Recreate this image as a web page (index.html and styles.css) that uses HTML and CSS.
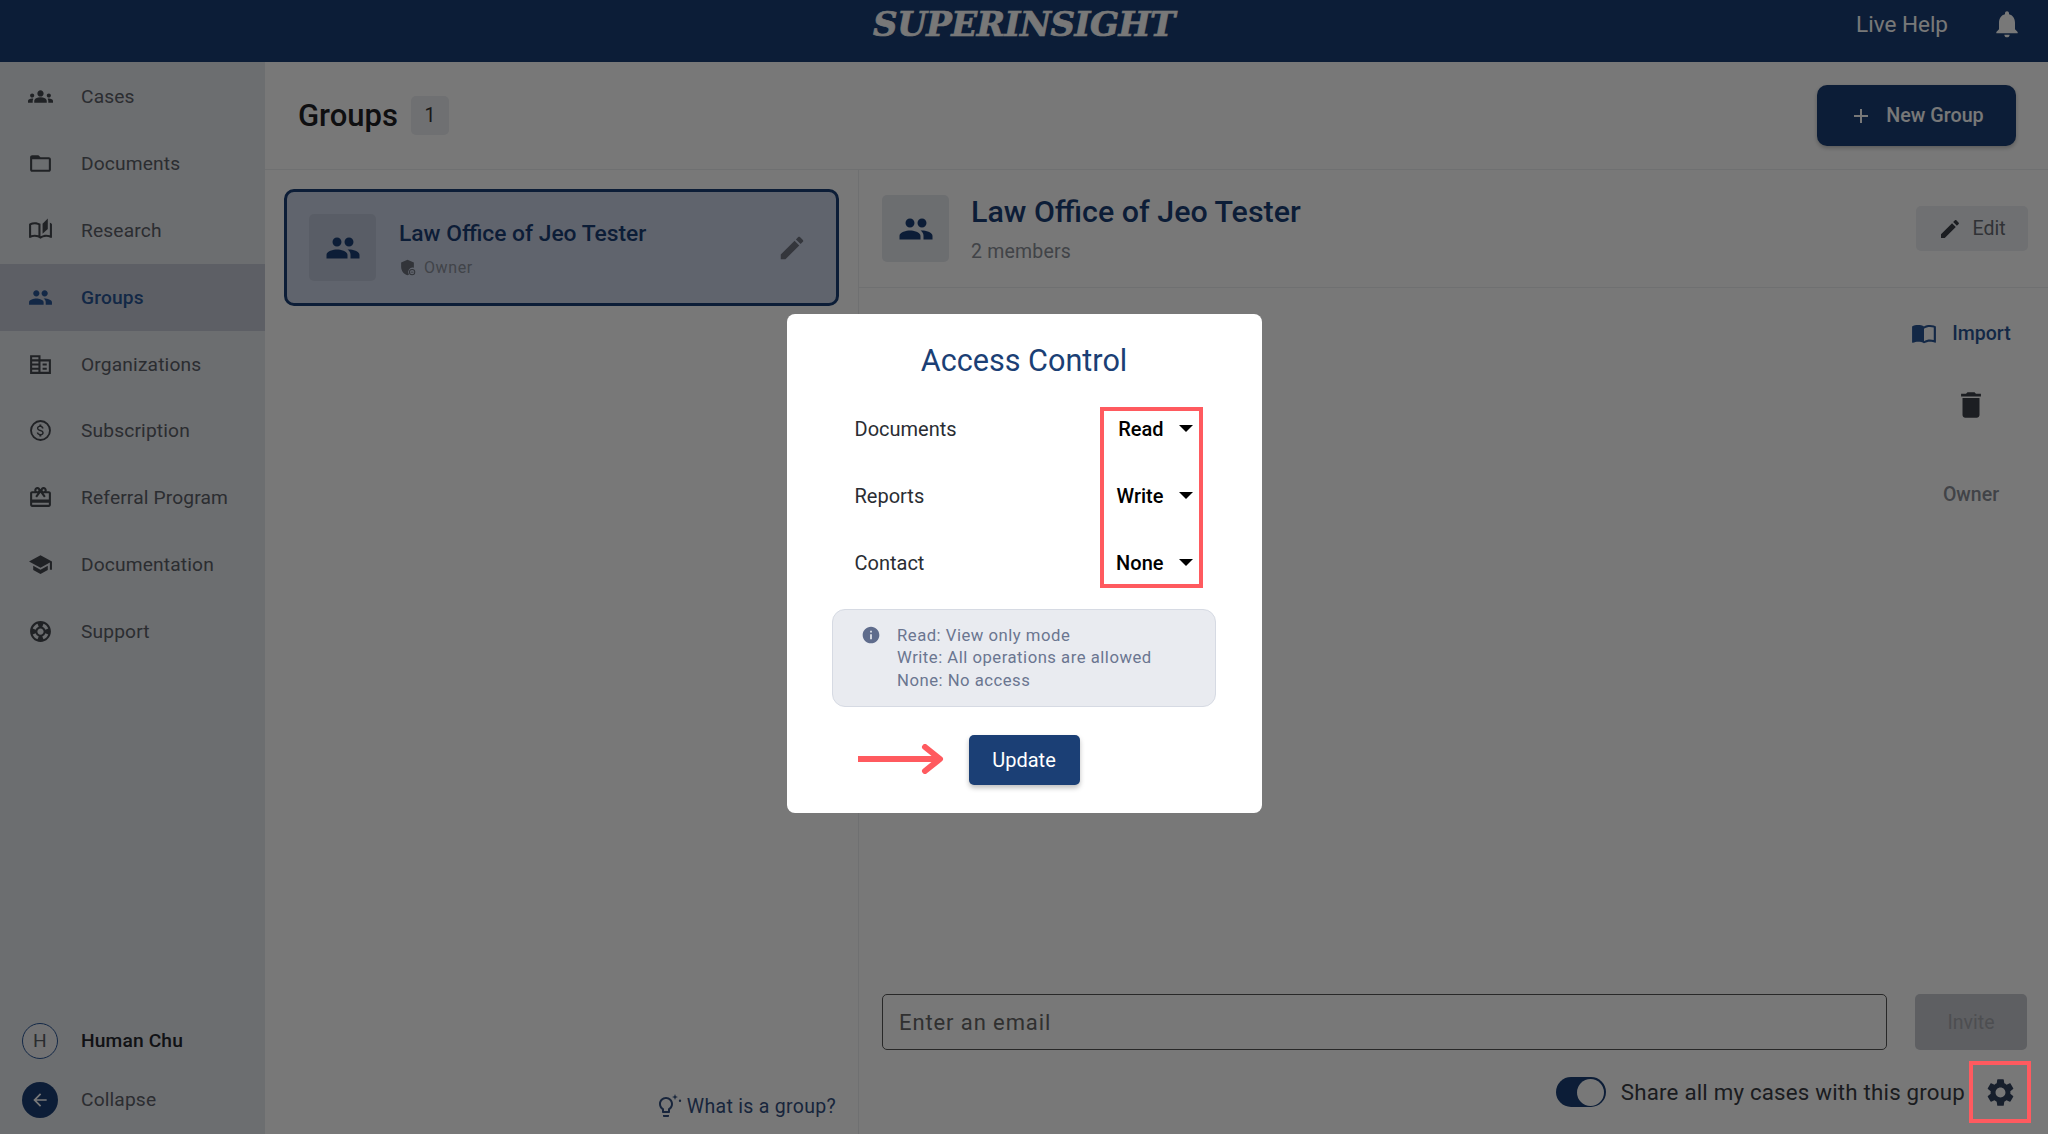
FILE: index.html
```html
<!DOCTYPE html>
<html lang="en">
<head>
	<meta charset="UTF-8">
	<title>Groups - Superinsight</title>
	<link rel="stylesheet" href="styles.css">
</head>
<body>

<svg class="sprite" xmlns="http://www.w3.org/2000/svg">
	<symbol id="i-cases" viewBox="0 0 24 24"><path d="M12 12.75c1.63 0 3.07.39 4.24.9 1.08.48 1.76 1.56 1.76 2.73V18H6v-1.61c0-1.18.68-2.26 1.76-2.73 1.17-.52 2.61-.91 4.24-.91zM4 13c1.1 0 2-.9 2-2s-.9-2-2-2-2 .9-2 2 .9 2 2 2zm1.13 1.1c-.37-.06-.74-.1-1.13-.1-.99 0-1.93.21-2.78.58C.48 14.9 0 15.62 0 16.43V18h4.5v-1.61c0-.83.23-1.61.63-2.29zM20 13c1.1 0 2-.9 2-2s-.9-2-2-2-2 .9-2 2 .9 2 2 2zm4 3.43c0-.81-.48-1.53-1.22-1.85-.85-.37-1.79-.58-2.78-.58-.39 0-.76.04-1.13.1.4.68.63 1.46.63 2.29V18H24v-1.57zM12 6c1.66 0 3 1.34 3 3s-1.34 3-3 3-3-1.34-3-3 1.34-3 3-3z"/></symbol>
	<symbol id="i-folder" viewBox="0 0 24 24"><path d="M20 6h-8l-2-2H4c-1.1 0-1.99.9-1.99 2L2 18c0 1.1.9 2 2 2h16c1.1 0 2-.9 2-2V8c0-1.1-.9-2-2-2zm0 12H4V8h16v10z"/></symbol>
	<symbol id="i-research" viewBox="0 0 24 24"><path d="M22.470 5.200C22 4.960 21.510 4.760 21 4.590v12.030C19.860 16.210 18.690 16 17.500 16c-1.900 0-3.780.54-5.500 1.580V5.480C10.380 4.550 8.510 4 6.500 4 4.710 4 3.020 4.440 1.530 5.200 1.200 5.360 1 5.710 1 6.080v12.080c0 .58.47.99 1 .99.16 0 .32-.04.48-.12C3.690 18.400 5.050 18 6.500 18c2.070 0 3.980.82 5.500 2 1.520-1.180 3.430-2 5.500-2 1.450 0 2.810.4 4.020 1.040.16.08.32.12.48.12.52 0 1-.41 1-.99V6.080c0-.37-.2-.72-.53-.88zM10 16.620C8.860 16.210 7.690 16 6.500 16s-2.360.21-3.500.62V6.710C4.110 6.240 5.280 6 6.500 6c1.200 0 2.390.25 3.500.72v9.900z"/><path d="M19 .5l-5 5V15l5-4.500V.5z"/></symbol>
	<symbol id="i-groups" viewBox="0 0 24 24"><path d="M16 11c1.660 0 2.990-1.340 2.990-3S17.660 5 16 5c-1.660 0-3 1.340-3 3s1.340 3 3 3zm-8 0c1.660 0 2.990-1.340 2.990-3S9.660 5 8 5C6.340 5 5 6.340 5 8s1.340 3 3 3zm0 2c-2.330 0-7 1.170-7 3.500V19h14v-2.500c0-2.330-4.670-3.500-7-3.500zm8 0c-.29 0-.62.02-.97.05 1.160.84 1.970 1.970 1.970 3.450V19h6v-2.500c0-2.330-4.670-3.500-7-3.500z"/></symbol>
	<symbol id="i-org" viewBox="0 0 24 24"><path d="M12 7V3H2v18h20V7H12zM10 19H4v-2h6v2zm0-4H4v-2h6v2zm0-4H4V9h6v2zm0-4H4V5h6v2zm10 12h-8V9h8v10zm-2-8h-4v2h4v-2zm0 4h-4v2h4v-2z"/></symbol>
	<symbol id="i-paid" viewBox="0 0 24 24"><path fill-rule="evenodd" d="M12 2a10 10 0 1 0 0 20 10 10 0 0 0 0-20zm0 1.800a8.200 8.200 0 1 1 0 16.400 8.200 8.200 0 0 1 0-16.400z"/><path d="M11.900 11.200c-1.500-.4-2-.8-2-1.400 0-.7.700-1.200 1.800-1.200 1.200 0 1.600.6 1.700 1.400h1.500c0-1.100-.7-2.200-2.100-2.500V6.200h-1.900v1.300c-1.300.3-2.300 1.100-2.300 2.400 0 1.500 1.300 2.300 3.100 2.700 1.700.4 2 1 2 1.600 0 .5-.3 1.200-1.800 1.200-1.400 0-1.900-.6-2-1.400H8.400c.1 1.500 1.200 2.300 2.500 2.500v1.300h1.900v-1.300c1.300-.2 2.300-1 2.300-2.300 0-1.900-1.600-2.500-3.200-3z"/></symbol>
	<symbol id="i-gift" viewBox="0 0 24 24"><path d="M20 6h-2.180c.11-.31.18-.65.18-1 0-1.660-1.340-3-3-3-1.050 0-1.960.54-2.500 1.350l-.5.67-.5-.68C10.960 2.540 10.050 2 9 2 7.340 2 6 3.340 6 5c0 .35.07.69.18 1H4c-1.110 0-1.990.89-1.990 2L2 19c0 1.110.89 2 2 2h16c1.110 0 2-.89 2-2V8c0-1.110-.89-2-2-2zm-5-2c.55 0 1 .45 1 1s-.45 1-1 1-1-.45-1-1 .45-1 1-1zM9 4c.55 0 1 .45 1 1s-.45 1-1 1-1-.45-1-1 .45-1 1-1zm11 15H4v-2h16v2zm0-5H4V8h5.080L7 10.830 8.620 12 12 7.400l3.380 4.600L17 10.830 14.920 8H20v6z"/></symbol>
	<symbol id="i-school" viewBox="0 0 24 24"><path d="M5 13.180v4L12 21l7-3.820v-4L12 17l-7-3.820zM12 3L1 9l11 6 9-4.910V17h2V9L12 3z"/></symbol>
	<symbol id="i-support" viewBox="0 0 24 24"><path d="M12 2C6.480 2 2 6.480 2 12s4.480 10 10 10 10-4.480 10-10S17.520 2 12 2zm7.460 7.120l-2.780 1.150c-.51-1.360-1.580-2.440-2.950-2.940l1.150-2.780c2.100.8 3.770 2.470 4.580 4.570zM12 15c-1.660 0-3-1.340-3-3s1.340-3 3-3 3 1.340 3 3-1.340 3-3 3zM9.130 4.540l1.170 2.780c-1.380.5-2.470 1.590-2.980 2.970L4.540 9.130c.81-2.110 2.480-3.780 4.590-4.590zM4.540 14.870l2.780-1.150c.51 1.380 1.590 2.460 2.970 2.960l-1.170 2.780c-2.100-.81-3.770-2.480-4.580-4.590zm10.340 4.590l-1.150-2.780c1.370-.51 2.450-1.590 2.950-2.970l2.780 1.170c-.81 2.100-2.480 3.770-4.580 4.580z"/></symbol>
	<symbol id="i-edit" viewBox="0 0 24 24"><path d="M3 17.250V21h3.750L17.810 9.940l-3.750-3.750L3 17.250zM20.710 7.040c.39-.39.39-1.020 0-1.410l-2.340-2.340c-.39-.39-1.020-.39-1.410 0l-1.830 1.830 3.750 3.750 1.830-1.830z"/></symbol>
	<symbol id="i-bell" viewBox="0 0 24 24"><path d="M12 22c1.100 0 2-.9 2-2h-4c0 1.100.89 2 2 2zm6-6v-5c0-3.070-1.640-5.640-4.500-6.320V4c0-.83-.67-1.500-1.500-1.500s-1.500.67-1.500 1.500v.68C7.630 5.360 6 7.920 6 11v5l-2 2v1h16v-1l-2-2z"/></symbol>
	<symbol id="i-trash" viewBox="0 0 24 24"><path d="M6 19c0 1.100.9 2 2 2h8c1.100 0 2-.9 2-2V7H6v12zM19 4h-3.500l-1-1h-5l-1 1H5v2h14V4z"/></symbol>
	<symbol id="i-gear" viewBox="0 0 24 24"><path d="M19.140 12.940c.04-.3.06-.61.06-.94 0-.32-.02-.64-.07-.94l2.030-1.580c.18-.14.23-.41.12-.61l-1.920-3.320c-.12-.22-.37-.29-.59-.22l-2.390.96c-.5-.38-1.030-.7-1.620-.94l-.36-2.540c-.04-.24-.24-.41-.48-.41h-3.840c-.24 0-.43.17-.47.41l-.36 2.540c-.59.24-1.130.57-1.620.94l-2.390-.96c-.22-.08-.47 0-.59.22L2.740 8.870c-.12.21-.08.47.12.61l2.030 1.580c-.05.3-.09.63-.09.94s.02.64.07.94l-2.030 1.580c-.18.14-.23.41-.12.61l1.920 3.320c.12.22.37.29.59.22l2.390-.96c.5.38 1.030.7 1.620.94l.36 2.540c.05.24.24.41.48.41h3.840c.24 0 .44-.17.47-.41l.36-2.540c.59-.24 1.130-.56 1.620-.94l2.390.96c.22.08.47 0 .59-.22l1.920-3.320c.12-.22.07-.47-.12-.61l-2.010-1.580zM12 15.600c-1.980 0-3.600-1.620-3.600-3.600s1.620-3.600 3.600-3.600 3.600 1.620 3.600 3.600-1.620 3.600-3.600 3.600z"/></symbol>
	<symbol id="i-info" viewBox="0 0 24 24"><path d="M12 2C6.480 2 2 6.480 2 12s4.480 10 10 10 10-4.480 10-10S17.520 2 12 2zm1 15h-2v-6h2v6zm0-8h-2V7h2v2z"/></symbol>
	<symbol id="i-back" viewBox="0 0 24 24"><path d="M20 11H7.830l5.590-5.590L12 4l-8 8 8 8 1.410-1.410L7.830 13H20v-2z"/></symbol>
	<symbol id="i-add" viewBox="0 0 24 24"><path d="M19 13h-6v6h-2v-6H5v-2h6V5h2v6h6v2z"/></symbol>
	<symbol id="i-book" viewBox="0 0 24 24"><path d="M21 5c-1.110-.35-2.330-.5-3.500-.5-1.950 0-4.050.4-5.500 1.500-1.450-1.100-3.550-1.500-5.500-1.500S2.450 4.900 1 6v14.650c0 .25.25.5.5.5.1 0 .15-.05.25-.05C3.100 20.450 5.050 20 6.500 20c1.950 0 4.050.4 5.500 1.500 1.350-.85 3.800-1.500 5.500-1.500 1.650 0 3.350.3 4.750 1.050.1.05.15.05.25.05.25 0 .5-.25.5-.5V6c-.6-.45-1.250-.75-2-1zm0 13.500c-1.100-.35-2.300-.5-3.500-.5-1.700 0-4.150.65-5.500 1.500V8c1.350-.85 3.800-1.500 5.500-1.500 1.200 0 2.400.15 3.500.5v11.500z"/></symbol>
	<symbol id="i-shield" viewBox="0 0 24 24"><path d="M12 1L3 5v6c0 5.550 3.840 10.740 9 12 .7-.17 1.370-.43 2-.76A6.500 6.500 0 0 1 21 12.300c0-.43 0-.87 0-1.300V5l-9-4z"/><path fill-rule="evenodd" d="M18.500 14a4.500 4.500 0 1 0 0 9 4.500 4.500 0 0 0 0-9zm0 1.400a3.100 3.100 0 1 1 0 6.200 3.100 3.100 0 0 1 0-6.200zM16.500 18h4v1h-4z"/></symbol>
	<symbol id="i-bulb" viewBox="0 0 30 26"><path d="M9 23c0 .55.45 1 1 1h4c.55 0 1-.45 1-1v-1H9v1zm3-19C8.140 4 5 7.140 5 11c0 2.380 1.190 4.470 3 5.740V19c0 .55.45 1 1 1h6c.55 0 1-.45 1-1v-2.260c1.810-1.270 3-3.360 3-5.740 0-3.860-3.140-7-7-7zm2.850 11.100l-.85.6V18h-4v-2.300l-.85-.6C7.800 14.160 7 12.630 7 11c0-2.760 2.240-5 5-5s5 2.240 5 5c0 1.630-.8 3.160-2.150 4.100z"/><path d="M21 1l.8 2.200L24 4l-2.200.8L21 7l-.8-2.200L18 4l2.200-.8zM26 6.500a1.200 1.200 0 1 1 0 2.400 1.200 1.200 0 0 1 0-2.400z"/></symbol>
</svg>

<div id="app">
	<header class="topbar">
		<div></div>
		<div class="logo">SUPERINSIGHT</div>
		<div class="topbar-right">
			<span class="live-help">Live Help</span>
			<svg class="icon bell"><use href="#i-bell"/></svg>
		</div>
	</header>

	<div class="layout">
		<aside class="sidebar">
			<nav>
				<a class="nav-item"><svg class="icon"><use href="#i-cases"/></svg>Cases</a>
				<a class="nav-item"><svg class="icon"><use href="#i-folder"/></svg>Documents</a>
				<a class="nav-item"><svg class="icon"><use href="#i-research"/></svg>Research</a>
				<a class="nav-item active"><svg class="icon"><use href="#i-groups"/></svg>Groups</a>
				<a class="nav-item"><svg class="icon"><use href="#i-org"/></svg>Organizations</a>
				<a class="nav-item"><svg class="icon"><use href="#i-paid"/></svg>Subscription</a>
				<a class="nav-item"><svg class="icon"><use href="#i-gift"/></svg>Referral Program</a>
				<a class="nav-item"><svg class="icon"><use href="#i-school"/></svg>Documentation</a>
				<a class="nav-item"><svg class="icon"><use href="#i-support"/></svg>Support</a>
			</nav>
			<div class="sidebar-foot">
				<div class="foot-row user"><span class="avatar">H</span>Human Chu</div>
				<div class="foot-row"><span class="collapse-btn"><svg class="icon"><use href="#i-back"/></svg></span>Collapse</div>
			</div>
		</aside>

		<main class="main">
			<div class="page-head">
				<h1>Groups</h1>
				<span class="count">1</span>
				<button class="new-group"><svg class="icon"><use href="#i-add"/></svg>New Group</button>
			</div>

			<div class="split">
				<section class="list-pane">
					<div class="group-card">
						<div class="group-thumb"><svg class="icon"><use href="#i-groups"/></svg></div>
						<div class="group-info">
							<div class="group-name">Law Office of Jeo Tester</div>
							<div class="group-role"><svg class="icon"><use href="#i-shield"/></svg>Owner</div>
						</div>
						<svg class="icon card-edit"><use href="#i-edit"/></svg>
					</div>
					<div class="what-is"><svg class="icon"><use href="#i-bulb"/></svg>What is a group?</div>
				</section>

				<section class="detail-pane">
					<div class="detail-head">
						<div class="group-thumb small"><svg class="icon"><use href="#i-groups"/></svg></div>
						<div class="detail-title">
							<h2>Law Office of Jeo Tester</h2>
							<div class="members">2 members</div>
						</div>
						<button class="edit-btn"><svg class="icon"><use href="#i-edit"/></svg>Edit</button>
					</div>

					<div class="detail-body">
						<div class="import"><svg class="icon"><use href="#i-book"/></svg>Import</div>
						<svg class="icon trash"><use href="#i-trash"/></svg>
						<div class="member-role">Owner</div>
					</div>

					<div class="invite-row">
						<div class="email-input">Enter an email</div>
						<button class="invite-btn">Invite</button>
					</div>
					<div class="share-row">
						<span class="toggle"><span class="knob"></span></span>
						<span class="share-label">Share all my cases with this group</span>
						<span class="gear-box"><svg class="icon"><use href="#i-gear"/></svg></span>
					</div>
				</section>
			</div>
		</main>
	</div>
</div>

<div class="backdrop">
	<div class="modal">
		<h3>Access Control</h3>
		<div class="perm-row"><span>Documents</span><span class="perm-select">Read<i class="caret"></i></span></div>
		<div class="perm-row"><span>Reports</span><span class="perm-select">Write<i class="caret"></i></span></div>
		<div class="perm-row"><span>Contact</span><span class="perm-select">None<i class="caret"></i></span></div>

		<div class="hint">
			<svg class="icon"><use href="#i-info"/></svg>
			<div>Read: View only mode<br>Write: All operations are allowed<br>None: No access</div>
		</div>

		<button class="update-btn">Update</button>

		<div class="mark-box"></div>
		<svg class="mark-arrow" viewBox="0 0 86 30"><path d="M0 15H80M67 3 82 15 67 27" fill="none" stroke="#ff5a5f" stroke-width="6" stroke-linejoin="round" stroke-linecap="round"/></svg>
	</div>
	<div class="mark-gear"></div>
</div>

</body>
</html>
```

FILE: styles.css
```css
* {
	box-sizing: border-box;
}

html, body {
	height: 100%;
	margin: 0;
}

body {
	font-family: Roboto, sans-serif;
	font-size: 19.5px;
	background-color: #fff;
	overflow: hidden;
}

h1, h2, h3 {
	margin: 0;
	font-weight: 400;
}

button {
	font-family: inherit;
	border: none;
}

.sprite {
	display: none;
}

.icon {
	display: block;
	width: 24px;
	height: 24px;
	fill: currentColor;
	flex: none;
}

#app {
	display: flex;
	flex-direction: column;
	height: 100%;
}

/* top bar */
.topbar {
	display: grid;
	grid-template-columns: 1fr auto 1fr;
	align-items: center;
	height: 62px;
	padding: 0 25px 14px 25px;
	background-color: #1b3f75;
	color: #fff;
}

.logo {
	font-family: "DejaVu Serif", serif;
	font-size: 34px;
	font-weight: 700;
	font-style: italic;
	letter-spacing: -0.5px;
	-webkit-text-stroke: 0.7px #fff;
}

.topbar-right {
	display: flex;
	justify-content: flex-end;
	align-items: center;
	gap: 43px;
}

.live-help {
	font-size: 22.5px;
}

.bell {
	width: 32px;
	height: 32px;
}

.layout {
	display: flex;
	flex: 1;
	min-height: 0;
}

/* sidebar */
.sidebar {
	display: flex;
	flex-direction: column;
	width: 265px;
	padding-top: 1.5px;
	background-color: #e6e9ee;
	color: #5c6068;
	font-size: 19.2px;
	letter-spacing: 0.15px;
}

.nav-item {
	display: flex;
	align-items: center;
	gap: 28px;
	height: 66.8px;
	padding-left: 28px;
}

.nav-item .icon {
	width: 25px;
	height: 25px;
	color: #45494f;
}

.nav-item.active {
	background-color: #c5cad6;
	color: #2a5696;
	font-weight: 500;
}

.nav-item.active .icon {
	color: #2a5696;
}

.sidebar-foot {
	margin-top: auto;
	padding-bottom: 5px;
}

.foot-row {
	display: flex;
	align-items: center;
	gap: 23px;
	height: 59px;
	padding-left: 22px;
}

.foot-row.user {
	color: #25282e;
	font-weight: 500;
}

.avatar, .collapse-btn {
	display: flex;
	justify-content: center;
	align-items: center;
	width: 36px;
	height: 36px;
	border-radius: 50%;
}

.avatar {
	border: 1.5px solid #2a5696;
	color: #5a5f66;
	font-weight: 400;
	background-color: #f2f3f5;
}

.collapse-btn {
	background-color: #1b3f75;
	color: #fff;
}

.collapse-btn .icon {
	width: 20px;
	height: 20px;
}

/* main area */
.main {
	display: flex;
	flex-direction: column;
	flex: 1;
	min-width: 0;
	background-color: #fff;
}

.page-head {
	display: flex;
	align-items: center;
	height: 108px;
	padding: 0 32px 0 33px;
	border-bottom: 1.5px solid #eceef1;
}

h1 {
	font-size: 31px;
	font-weight: 500;
	color: #1f2126;
}

.count {
	display: flex;
	justify-content: center;
	align-items: center;
	width: 38px;
	height: 39px;
	margin-left: 13px;
	border-radius: 5px;
	background-color: #eceef2;
	color: #333;
}

.new-group {
	display: flex;
	align-items: center;
	justify-content: center;
	gap: 13px;
	width: 199px;
	height: 61px;
	margin-left: auto;
	border-radius: 10px;
	background-color: #1b3f75;
	color: #fff;
	font-size: 19.7px;
	font-weight: 500;
	box-shadow: 0 2px 4px rgba(0, 0, 0, 0.25);
}

.split {
	display: flex;
	flex: 1;
	min-height: 0;
}

.list-pane {
	display: flex;
	flex-direction: column;
	width: 594px;
	padding: 19px 19px 15px 19px;
	border-right: 1.5px solid #eceef1;
}

.group-card {
	display: flex;
	align-items: center;
	height: 117px;
	padding: 0 29px 0 22px;
	border: 3px solid #1b3f75;
	border-radius: 10px;
	background-color: #cdd5e8;
}

.group-thumb {
	display: flex;
	justify-content: center;
	align-items: center;
	width: 67px;
	height: 67px;
	border-radius: 5px;
	background-color: #bec6d8;
	color: #1b3f75;
	flex: none;
}

.group-thumb .icon {
	width: 36px;
	height: 36px;
}

.group-thumb.small {
	background-color: #e6e9ee;
}

.group-info {
	flex: 1;
	margin-left: 23px;
	padding-top: 2px;
}

.group-name {
	font-size: 22.8px;
	font-weight: 500;
	color: #1b3f75;
}

.group-role {
	display: flex;
	align-items: center;
	gap: 8px;
	margin-top: 11px;
	font-size: 16px;
	letter-spacing: 0.6px;
	color: #8a909c;
}

.group-role .icon {
	width: 17px;
	height: 17px;
	color: #6a6f7a;
}

.card-edit {
	width: 30px;
	height: 30px;
	color: #6f7480;
}

.what-is {
	display: flex;
	align-items: center;
	gap: 3px;
	align-self: flex-end;
	margin: auto 3px 0 0;
	color: #33507f;
	letter-spacing: 0.3px;
}

.what-is .icon {
	width: 30px;
	height: 26px;
}

/* group detail */
.detail-pane {
	display: flex;
	flex-direction: column;
	flex: 1;
	min-width: 0;
}

.detail-head {
	display: flex;
	align-items: center;
	height: 118px;
	padding: 0 20px 0 23px;
	border-bottom: 1.5px solid #eceef1;
}

.detail-title {
	flex: 1;
	margin: -1px 0 0 22px;
}

h2 {
	font-size: 30.4px;
	font-weight: 500;
	color: #1b3f75;
	line-height: 36px;
}

.members {
	margin-top: 10px;
	color: #8a8f98;
	letter-spacing: 0.2px;
}

.edit-btn {
	display: flex;
	align-items: center;
	justify-content: center;
	gap: 10px;
	width: 112px;
	height: 45px;
	border-radius: 5px;
	background-color: #eceef2;
	color: #676b73;
	font-size: 19.5px;
}

.edit-btn .icon {
	color: #3a3e46;
}

.detail-body {
	display: flex;
	flex-direction: column;
	flex: 1;
	align-items: center;
	align-self: flex-end;
	width: 114px;
	margin-right: 20px;
	padding-top: 32px;
	color: #8a8f98;
}

.import {
	display: flex;
	align-items: center;
	gap: 15px;
	margin-right: 20px;
	color: #2a5696;
	font-weight: 500;
	white-space: nowrap;
}

.import .icon {
	width: 26px;
	height: 26px;
	color: #2a5696;
}

.trash {
	width: 34px;
	height: 34px;
	margin-top: 42px;
	color: #3c4048;
}

.member-role {
	margin-top: 61px;
	font-weight: 500;
}

.invite-row {
	display: flex;
	gap: 28px;
	padding: 0 21px 0 23px;
}

.email-input {
	display: flex;
	align-items: center;
	flex: 1;
	height: 56px;
	padding-left: 16px;
	border: 1.5px solid #555;
	border-radius: 5px;
	font-size: 22px;
	letter-spacing: 0.9px;
	color: #666;
}

.invite-btn {
	width: 112px;
	height: 56px;
	border-radius: 5px;
	background-color: #c8cad0;
	color: #a4a6ac;
	font-size: 19.5px;
}

.share-row {
	display: flex;
	justify-content: flex-end;
	align-items: center;
	margin-top: 11px;
	padding: 0 17px 11px 0;
}

.toggle {
	display: flex;
	justify-content: flex-end;
	align-items: center;
	width: 50px;
	height: 30px;
	padding-right: 1.5px;
	border-radius: 15px;
	background-color: #1b3f75;
}

.knob {
	width: 27px;
	height: 27px;
	border-radius: 50%;
	background-color: #fff;
}

.share-label {
	margin-left: 15px;
	font-size: 22.3px;
	color: #3a3d44;
	letter-spacing: 0.2px;
}

.gear-box {
	display: flex;
	justify-content: center;
	align-items: center;
	width: 62px;
	height: 62px;
	margin-left: 4px;
}

.gear-box .icon {
	width: 33px;
	height: 33px;
	color: #32425f;
}

/* dimmed layer and dialog */
.backdrop {
	position: absolute;
	inset: 0;
	display: flex;
	justify-content: center;
	align-items: center;
	padding-bottom: 7px;
	background-color: rgba(0, 0, 0, 0.53);
}

.modal {
	position: relative;
	width: 475px;
	height: 499px;
	padding-top: 29px;
	border-radius: 8px;
	background-color: #fff;
	color: #2a2d33;
}

h3 {
	font-size: 30.6px;
	line-height: 36px;
	text-align: center;
	color: #1b3f75;
	margin-bottom: 16px;
}

.perm-row {
	display: flex;
	justify-content: space-between;
	align-items: center;
	height: 67px;
	padding: 0 69px 0 68px;
	font-size: 20px;
}

.perm-select {
	display: flex;
	align-items: center;
	gap: 15px;
	font-weight: 500;
	color: #000;
}

.caret {
	width: 0;
	height: 0;
	border-left: 7px solid transparent;
	border-right: 7px solid transparent;
	border-top: 7px solid #000;
}

.hint {
	display: flex;
	gap: 16px;
	width: 384px;
	height: 98px;
	margin: 13px auto 0;
	padding: 15px 0 0 28px;
	border: 1.5px solid #d6dae3;
	border-radius: 13px;
	background-color: #e9ebf0;
	font-size: 16.7px;
	line-height: 22.3px;
	letter-spacing: 0.5px;
	color: #6b7690;
}

.hint .icon {
	width: 20px;
	height: 20px;
	color: #5f6c8c;
}

.update-btn {
	display: block;
	width: 111px;
	height: 50px;
	margin: 28px auto 0;
	border-radius: 5px;
	background-color: #1b3f75;
	color: #fff;
	font-size: 20px;
	box-shadow: 0 3px 5px rgba(0, 0, 0, 0.25);
}

/* red annotations drawn on top of everything */
.mark-box {
	position: absolute;
	left: 313px;
	top: 93px;
	width: 103px;
	height: 181px;
	border: 4px solid #ff5a5f;
}

.mark-arrow {
	position: absolute;
	left: 71px;
	top: 430px;
	width: 86px;
	height: 30px;
}

.mark-gear {
	position: absolute;
	right: 17px;
	bottom: 11px;
	width: 62px;
	height: 62px;
	border: 4px solid #ff5a5f;
}
```
